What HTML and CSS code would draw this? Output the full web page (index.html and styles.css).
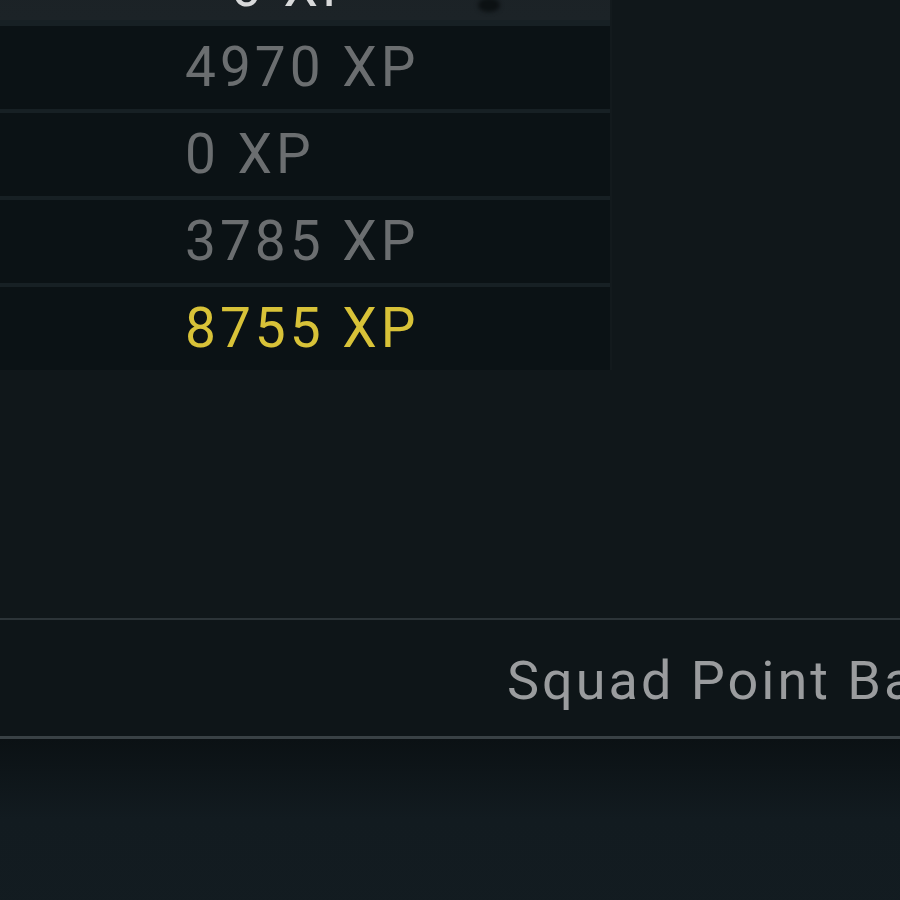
FILE: index.html
```html
<!DOCTYPE html>
<html lang="en">
<head>
    <meta charset="UTF-8">
    <meta name="viewport" content="width=device-width, initial-scale=1.0">
    <title>Squad XP</title>
    <link rel="stylesheet" href="styles.css">
</head>
<body>
    <div class="board">
        <div class="row current">
            <span class="xp">0 XP</span>
            <span class="badge"></span>
        </div>
        <div class="row"><span class="xp">4970 XP</span></div>
        <div class="row"><span class="xp">0 XP</span></div>
        <div class="row"><span class="xp">3785 XP</span></div>
        <div class="row"><span class="xp gold">8755 XP</span></div>
    </div>

    <div class="footer">
        <span class="label">Squad Point Balance</span>
    </div>
    <div class="floor"></div>
</body>
</html>
```

FILE: styles.css
```css
*{
    box-sizing: border-box;
    margin:0;
    padding:0;
}
html, body{
    height:100%;
    overflow:hidden;
}
body{
    background:#10171a;
    font-family: Roboto, "Liberation Sans", sans-serif;
}
.board{
    width:612px;
    margin-top:-55px;
    display:flex;
    flex-direction:column;
    gap:4px;
    background:#172024;
    border-right:2px solid #131a1d;
}
.row{
    height:83px;
    background:#0b1215;
    display:flex;
    align-items:center;
    padding-left:185px;
    position:relative;
}
.row.current{
    height:75px;
    background:linear-gradient(#1b2125, #1c2327);
    margin-bottom:2px;
}
.xp{
    font-size:55px;
    letter-spacing:4px;
    color:#6b6e70;
    line-height:1;
    padding-top:0;
}
.current .xp{
    color:#d8d9da;
    padding-top:10px;
    padding-left:46px;
}
.gold{
    color:#d8c238;
}
.badge{
    position:absolute;
    left:478px;
    bottom:8px;
    width:22px;
    height:14px;
    border-radius:50%;
    background:#0c1113;
    filter:blur(2px);
}
.footer{
    margin-top:248px;
    height:121px;
    border-top:2px solid #2c3438;
    border-bottom:3px solid #394145;
    background:#0e1518;
    display:flex;
    align-items:center;
    padding-left:507px;
    white-space:nowrap;
    overflow:hidden;
}
.label{
    font-size:54px;
    letter-spacing:3px;
    color:#9a9c9e;
    padding-top:4px;
}
.floor{
    height:200px;
    background:linear-gradient(#0b1114, #121b20 40%, #131c21);
}
```
